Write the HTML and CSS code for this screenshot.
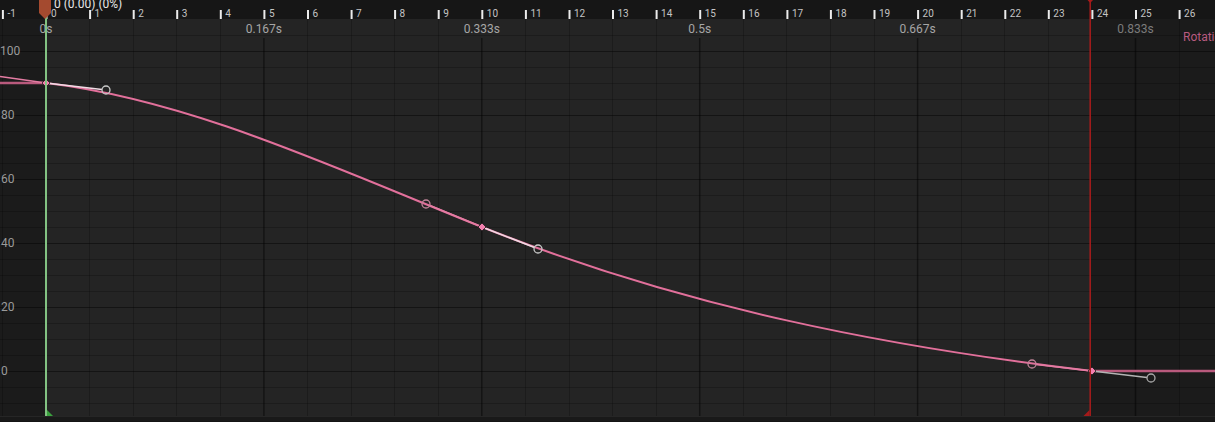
FILE: index.html
```html
<!DOCTYPE html>
<html lang="en">
<head>
<meta charset="utf-8">
<title>Curve Editor</title>
<link rel="stylesheet" href="styles.css">
</head>
<body>
<div class="editor">
  <svg class="canvas" width="1215" height="416" viewBox="0 0 1215 416" xmlns="http://www.w3.org/2000/svg">
    <!-- backgrounds -->
    <rect class="bg-out" x="0" y="19" width="46" height="397"/>
    <rect class="bg-in" x="46" y="19" width="1045" height="397"/>
    <rect class="bg-out" x="1091" y="19" width="124" height="397"/>

    <!-- grid -->
    <path class="grid-minor" d="M2.5 19V416M89.5 19V416M133.5 19V416M176.5 19V416M220.5 19V416M307.5 19V416M351.5 19V416M394.5 19V416M438.5 19V416M525.5 19V416M569.5 19V416M612.5 19V416M656.5 19V416M743.5 19V416M786.5 19V416M830.5 19V416M874.5 19V416M961.5 19V416M1004.5 19V416M1048.5 19V416M1179.5 19V416"/>
    <path class="grid-minor" d="M0 35.5H1215M0 67.5H1215M0 83.5H1215M0 99.5H1215M0 131.5H1215M0 147.5H1215M0 163.5H1215M0 195.5H1215M0 211.5H1215M0 227.5H1215M0 259.5H1215M0 275.5H1215M0 291.5H1215M0 323.5H1215M0 339.5H1215M0 355.5H1215M0 387.5H1215M0 403.5H1215"/>
    <path class="grid-major" d="M0 51.5H1215M0 115.5H1215M0 179.5H1215M0 243.5H1215M0 307.5H1215M0 371.5H1215"/>
    <path class="grid-major-v" d="M263.9 38V416M481.8 38V416M699.7 38V416M917.6 38V416M1135.5 38V416"/>

    <!-- value axis labels -->
    <text class="val" x="0" y="55">100</text>
    <text class="val" x="1" y="119">80</text>
    <text class="val" x="1" y="183">60</text>
    <text class="val" x="1" y="247">40</text>
    <text class="val" x="1" y="311">20</text>
    <text class="val" x="1" y="375">0</text>

    <!-- time labels -->
    <text class="time" x="46" y="33">0s</text>
    <text class="time" x="263.9" y="33">0.167s</text>
    <text class="time" x="481.8" y="33">0.333s</text>
    <text class="time" x="699.7" y="33">0.5s</text>
    <text class="time" x="917.6" y="33">0.667s</text>
    <text class="time time-out" x="1135.5" y="33">0.833s</text>
    <text class="curve-name" x="1183" y="41">Rotation</text>

    <!-- ruler -->
    <rect class="ruler" x="0" y="0" width="1215" height="19"/>
    <g class="ticks">
      <rect x="1.9" y="10" width="2" height="9"/>
      <rect x="45.5" y="10" width="2" height="9"/>
      <rect x="89.1" y="10" width="2" height="9"/>
      <rect x="132.7" y="10" width="2" height="9"/>
      <rect x="176.2" y="10" width="2" height="9"/>
      <rect x="219.8" y="10" width="2" height="9"/>
      <rect x="263.4" y="10" width="2" height="9"/>
      <rect x="307" y="10" width="2" height="9"/>
      <rect x="350.6" y="10" width="2" height="9"/>
      <rect x="394.1" y="10" width="2" height="9"/>
      <rect x="437.7" y="10" width="2" height="9"/>
      <rect x="481.3" y="10" width="2" height="9"/>
      <rect x="524.9" y="10" width="2" height="9"/>
      <rect x="568.5" y="10" width="2" height="9"/>
      <rect x="612" y="10" width="2" height="9"/>
      <rect x="655.6" y="10" width="2" height="9"/>
      <rect x="699.2" y="10" width="2" height="9"/>
      <rect x="742.8" y="10" width="2" height="9"/>
      <rect x="786.4" y="10" width="2" height="9"/>
      <rect x="829.9" y="10" width="2" height="9"/>
      <rect x="873.5" y="10" width="2" height="9"/>
      <rect x="917.1" y="10" width="2" height="9"/>
      <rect x="960.7" y="10" width="2" height="9"/>
      <rect x="1004.3" y="10" width="2" height="9"/>
      <rect x="1047.8" y="10" width="2" height="9"/>
      <rect x="1091.4" y="10" width="2" height="9"/>
      <rect x="1135" y="10" width="2" height="9"/>
      <rect x="1178.6" y="10" width="2" height="9"/>
    </g>
    <g class="frame-labels">
      <text x="7.4" y="17">-1</text>
      <text x="51" y="17">0</text>
      <text x="94.6" y="17">1</text>
      <text x="138.2" y="17">2</text>
      <text x="181.7" y="17">3</text>
      <text x="225.3" y="17">4</text>
      <text x="268.9" y="17">5</text>
      <text x="312.5" y="17">6</text>
      <text x="356.1" y="17">7</text>
      <text x="399.6" y="17">8</text>
      <text x="443.2" y="17">9</text>
      <text x="486.8" y="17">10</text>
      <text x="530.4" y="17">11</text>
      <text x="574" y="17">12</text>
      <text x="617.5" y="17">13</text>
      <text x="661.1" y="17">14</text>
      <text x="704.7" y="17">15</text>
      <text x="748.3" y="17">16</text>
      <text x="791.9" y="17">17</text>
      <text x="835.4" y="17">18</text>
      <text x="879" y="17">19</text>
      <text x="922.6" y="17">20</text>
      <text x="966.2" y="17">21</text>
      <text x="1009.8" y="17">22</text>
      <text x="1053.3" y="17">23</text>
      <text x="1096.9" y="17">24</text>
      <text x="1140.5" y="17">25</text>
      <text x="1184.1" y="17">26</text>
    </g>

    <!-- curve -->
    <path class="extrap" d="M0 83H46M1092 371H1215"/>
    <path class="tan-pink" d="M0 76.5L46 83"/>
    <path class="curve" d="M46 83C191 100 337 169 482 227C685 308 888 347 1092 371"/>

    <!-- tangents -->
    <path class="tan-white" d="M46 83L102 89.5M482 227L534.5 247.5"/>
    <path class="tan-pink" d="M430 205.5L482 227M1036 364.5L1092 371"/>
    <path class="tan-gray" d="M1092 371L1147 377.5"/>
    <circle class="handle" cx="106" cy="90" r="4"/>
    <circle class="handle handle-pink" cx="426" cy="204" r="4"/>
    <circle class="handle" cx="538" cy="249" r="4"/>
    <circle class="handle handle-pink" cx="1032" cy="364" r="4"/>
    <circle class="handle handle-gray" cx="1151" cy="378" r="4"/>

    <!-- keys -->
    <path class="key" d="M46 79L50 83L46 87L42 83Z"/>
    <path class="key" d="M482 223L486 227L482 231L478 227Z"/>
    <path class="key" d="M1092 367L1096 371L1092 375L1088 371Z"/>

    <!-- range markers -->
    <path class="start-line" d="M46 0V416"/>
    <path class="start-tri" d="M47 410L53 416H47Z"/>
    <path class="end-line" d="M1090.2 0V416"/>
    <path class="end-tri" d="M1089.5 410V416H1083.5Z"/>
    <path class="end-tri" d="M1087.5 0H1093L1090.2 3Z"/>

    <!-- playhead -->
    <path class="playhead" d="M39 -2H51V13L45 19L39 13Z"/>
    <text class="playhead-label" x="54" y="7.5">0 (0.00) (0%)</text>
  </svg>
  <div class="footer"></div>
</div>
</body>
</html>
```

FILE: styles.css
```css
html, body {
  margin: 0;
  padding: 0;
  background: #161616;
}

.editor {
  width: 1215px;
  height: 422px;
  overflow: hidden;
  display: flex;
  flex-direction: column;
  font-family: Roboto, "Liberation Sans", sans-serif;
}

.canvas {
  display: block;
  flex: 0 0 416px;
}

.footer {
  flex: 1 1 auto;
  background: #191919;
  border-top: 1px solid #262626;
  box-shadow: inset 0 -1px 0 #141414;
}

.bg-out { fill: #1b1b1b; }
.bg-in { fill: #242424; }
.ruler { fill: #161616; }

.grid-minor {
  fill: none;
  stroke: rgba(0, 0, 0, 0.2);
  stroke-width: 1;
}

.grid-major {
  fill: none;
  stroke: rgba(0, 0, 0, 0.42);
  stroke-width: 1.2;
}

.grid-major-v {
  fill: none;
  stroke: rgba(0, 0, 0, 0.45);
  stroke-width: 1.5;
}

.val {
  font-family: Roboto, "Liberation Sans", sans-serif;
  font-size: 12px;
  fill: #9a9a9a;
}

.time {
  font-family: Roboto, "Liberation Sans", sans-serif;
  font-size: 12px;
  fill: #a6a6a6;
  text-anchor: middle;
}

.time-out { fill: #7c7c7c; }

.curve-name {
  font-family: Roboto, "Liberation Sans", sans-serif;
  font-size: 12px;
  fill: #b85a80;
}

.ticks rect { fill: #ececec; }

.frame-labels text {
  font-family: Roboto, "Liberation Sans", sans-serif;
  font-size: 10px;
  fill: #c4c4c4;
}

.curve {
  fill: none;
  stroke: #e2709b;
  stroke-width: 2;
}

.extrap {
  fill: none;
  stroke: #b95a7d;
  stroke-width: 2.4;
}

.tan-pink {
  fill: none;
  stroke: #e47ca3;
  stroke-width: 1.6;
}

.tan-white {
  fill: none;
  stroke: #f0dbe4;
  stroke-width: 1.5;
}

.tan-gray {
  fill: none;
  stroke: #b4b4b4;
  stroke-width: 1.3;
}

.handle {
  fill: none;
  stroke: #c8c8c8;
  stroke-width: 1.3;
}

.handle-pink { stroke: #c08499; }
.handle-gray { stroke: #a8a8a8; }

.key {
  fill: #f27fae;
  stroke: #1a1a1a;
  stroke-width: 0.8;
}

.start-line {
  fill: none;
  stroke: #82c282;
  stroke-width: 2;
}

.start-tri { fill: #3aa23e; }

.end-line {
  fill: none;
  stroke: #a81c1c;
  stroke-width: 1.5;
}

.end-tri { fill: #a51a1a; }

.playhead { fill: #a44a2f; }

.playhead-label {
  font-family: Roboto, "Liberation Sans", sans-serif;
  font-size: 12px;
  fill: #e6e6e6;
}
```
